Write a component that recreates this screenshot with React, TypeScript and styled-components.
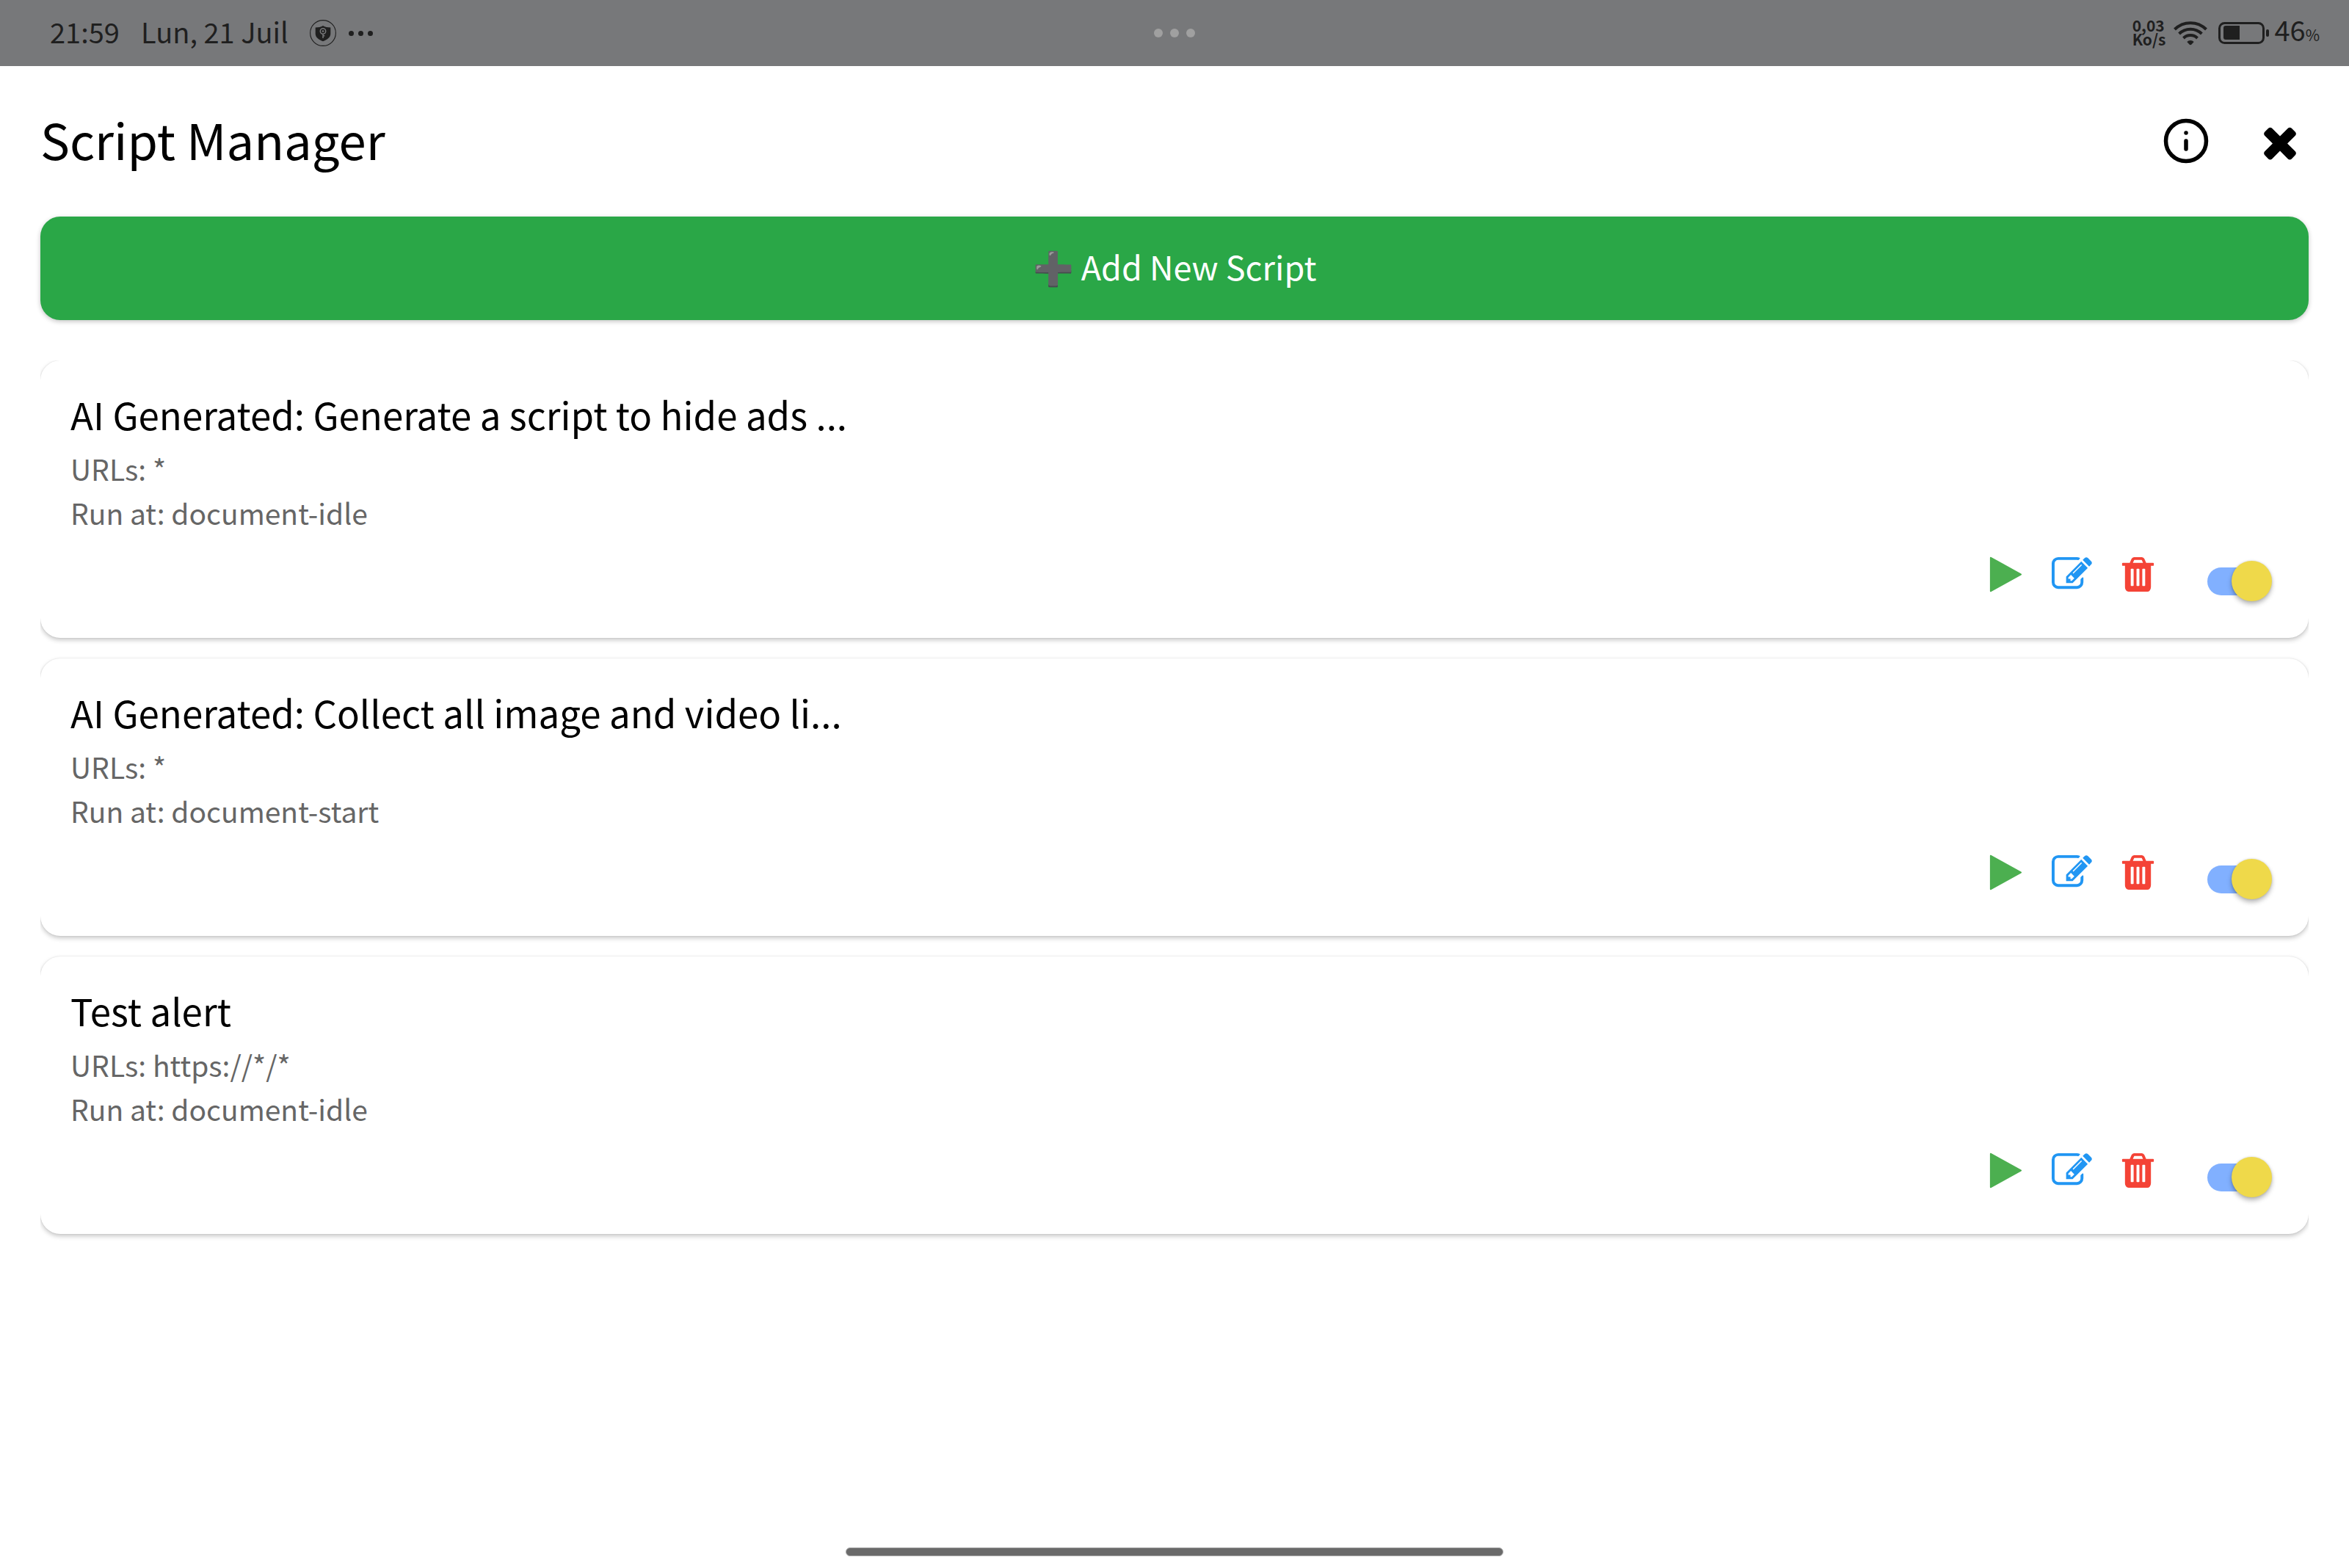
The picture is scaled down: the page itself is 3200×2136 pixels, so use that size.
import React, { useState } from "react";
import styled, { createGlobalStyle } from "styled-components";

const GlobalStyle = createGlobalStyle`
  *, *::before, *::after { box-sizing: border-box; }
  body {
    margin: 0;
    background: #ffffff;
    color: #000000;
    font-family: "Noto Sans CJK SC", "Noto Sans", sans-serif;
  }
  h1, h2, p, ul { margin: 0; padding: 0; font-weight: 400; }
  button { border: 0; background: none; padding: 0; font: inherit; cursor: pointer; }
`;

const Screen = styled.div`
  display: flex;
  flex-direction: column;
  min-height: 100vh;
`;

/* ---------- status bar ---------- */

const StatusBar = styled.div`
  display: grid;
  grid-template-columns: 1fr auto 1fr;
  align-items: center;
  height: 90px;
  padding: 0 40px;
  background: #77787a;
  color: #1f1f1f;
`;

const StatusGroup = styled.div<{ $gap: number; $indent?: number; $end?: boolean }>`
  display: flex;
  align-items: center;
  justify-content: ${(p) => (p.$end ? "flex-end" : "flex-start")};
  gap: ${(p) => p.$gap}px;
  padding-left: ${(p) => p.$indent ?? 0}px;
`;

const StatusText = styled.span`
  padding-bottom: 4px;
  font-size: 38px;
  line-height: 56px;
`;

const Percent = styled.span`
  font-size: 21px;
`;

const NetSpeed = styled.span`
  display: flex;
  flex-direction: column;
  padding-bottom: 2px;
  font-size: 21px;
  line-height: 19px;
  font-weight: 700;
`;

const Dots = styled.span<{ $size: number; $gap: number; $color: string }>`
  display: flex;
  gap: ${(p) => p.$gap}px;

  i {
    width: ${(p) => p.$size}px;
    height: ${(p) => p.$size}px;
    border-radius: 50%;
    background: ${(p) => p.$color};
  }
`;

/* ---------- page ---------- */

const Main = styled.main`
  flex: 1;
  padding: 53px 55px 0;
`;

const Header = styled.header`
  display: flex;
  justify-content: space-between;
  align-items: flex-start;
  margin-bottom: 60px;
`;

const Title = styled.h1`
  font-size: 67px;
  line-height: 92px;
`;

const HeaderActions = styled.div`
  display: flex;
  gap: 62px;
  padding: 16px 6px 0 0;
`;

const IconButton = styled.button<{ $size: number; $color?: string }>`
  display: block;
  width: ${(p) => p.$size}px;
  height: ${(p) => p.$size}px;
  color: ${(p) => p.$color ?? "#000000"};

  svg {
    display: block;
    width: 100%;
    height: 100%;
  }
`;

const AddButton = styled.button`
  && {
    display: block;
    width: 100%;
    padding: 36px 0 42px;
    border-radius: 27px;
    background: #2aa747;
    color: #ffffff;
    font-size: 45px;
    line-height: 63px;
    box-shadow: 0 2px 6px rgba(0, 0, 0, 0.24);
  }
`;

const ScriptList = styled.ul`
  display: flex;
  flex-direction: column;
  gap: 28px;
  margin-top: 55px;
  padding-bottom: 28px;
  overflow: hidden;
  list-style: none;
`;

const Card = styled.li`
  padding: 41px;
  border-radius: 27px;
  background: #ffffff;
  box-shadow: 0 3px 6px rgba(0, 0, 0, 0.22), 0 0 2px rgba(0, 0, 0, 0.12);
`;

const ScriptName = styled.h2`
  margin-bottom: 12px;
  font-size: 51px;
  line-height: 64px;
`;

const Meta = styled.p`
  color: #666666;
  font-size: 39px;
  line-height: 60px;
`;

const Actions = styled.div`
  display: flex;
  justify-content: flex-end;
  gap: 35px;
  height: 73px;
  margin-top: 27px;
`;

const SwitchLabel = styled.label`
  display: flex;
  align-items: center;
  padding: 0 16px 0 32px;
`;

const Switch = styled.input`
  appearance: none;
  display: flex;
  align-items: center;
  width: 81px;
  height: 38px;
  margin: 0;
  border-radius: 19px;
  background: #b0b0b0;
  cursor: pointer;

  &::before {
    content: "";
    flex: none;
    width: 55px;
    height: 55px;
    margin-left: -8px;
    border-radius: 50%;
    background: #f4f3f4;
    box-shadow: 0 4px 6px rgba(0, 0, 0, 0.28), 0 0 3px rgba(0, 0, 0, 0.14);
  }

  &:checked { background: #81b0ff; }
  &:checked::before { margin-left: 33px; background: #efd94a; }
`;

const Footer = styled.footer`
  display: flex;
  justify-content: center;
  padding-bottom: 16px;
`;

const HomeIndicator = styled.div`
  width: 28vw;
  height: 12px;
  border: 1px solid #a9a9a9;
  border-radius: 6px;
  background: #6a6a6a;
`;

/* ---------- icons ---------- */

const Glyph = ({ d, top = 0 }: { d: string; top?: number }) => (
  <svg viewBox={`0 ${top} 1792 1792`} fill="currentColor" overflow="visible" aria-hidden="true">
    <path d={d} />
  </svg>
);

const PLAY = "M1576 927l-1328 738q-23 13-39.5 3t-16.5-36v-1472q0-26 16.5-36t39.5 3l1328 738q23 13 23 31t-23 31z";
const EDIT =
  "M888 1184l116-116-152-152-116 116v56h96v96h56zm440-720q-16-16-33 1l-350 350q-17 17-1 33t33-1l350-350q17-17 1-33zm80 594v190q0 119-84.5 203.5t-203.5 84.5h-832q-119 0-203.5-84.5t-84.5-203.5v-832q0-119 84.5-203.5t203.5-84.5h832q63 0 117 25 15 7 18 23 3 17-9 29l-49 49q-14 14-32 8-23-6-45-6h-832q-66 0-113 47t-47 113v832q0 66 47 113t113 47h832q66 0 113-47t47-113v-126q0-13 9-22l64-64q15-15 35-7t20 29zm-96-738l288 288-672 672h-288v-288zm444 132l-92 92-288-288 92-92q28-28 68-28t68 28l152 152q28 28 28 68t-28 68z";
const TRASH =
  "M704 1376v-704q0-14-9-23t-23-9h-64q-14 0-23 9t-9 23v704q0 14 9 23t23 9h64q14 0 23-9t9-23zm256 0v-704q0-14-9-23t-23-9h-64q-14 0-23 9t-9 23v704q0 14 9 23t23 9h64q14 0 23-9t9-23zm256 0v-704q0-14-9-23t-23-9h-64q-14 0-23 9t-9 23v704q0 14 9 23t23 9h64q14 0 23-9t9-23zm-544-992h448l-48-117q-7-9-17-11h-317q-10 2-17 11zm928 32v64q0 14-9 23t-23 9h-96v948q0 83-47 143.5t-113 60.5h-832q-66 0-113-58.5t-47-141.5v-952h-96q-14 0-23-9t-9-23v-64q0-14 9-23t23-9h309l70-167q15-37 54-63t79-26h320q40 0 79 26t54 63l70 167h309q14 0 23 9t9 23z";
const TIMES =
  "M1490 1322q0 40-28 68l-136 136q-28 28-68 28t-68-28l-294-294-294 294q-28 28-68 28t-68-28l-136-136q-28-28-28-68t28-68l294-294-294-294q-28-28-28-68t28-68l136-136q28-28 68-28t68 28l294 294 294-294q28-28 68-28t68 28l136 136q28 28 28 68t-28 68l-294 294 294 294q28 28 28 68z";

const InfoIcon = () => (
  <svg viewBox="0 0 24 24" fill="none" stroke="currentColor" strokeWidth="2" strokeLinecap="round" aria-hidden="true">
    <circle cx="12" cy="12" r="10" />
    <path d="M12 16v-4M12 8h.01" />
  </svg>
);

const ShieldIcon = () => (
  <svg width="36" height="36" viewBox="0 0 36 36" aria-hidden="true">
    <circle cx="18" cy="18" r="17.4" fill="none" stroke="#1f1f1f" strokeWidth="1.1" />
    <path d="M18 8c3 2 6.500 2.300 10.300 2.400v8.600c0 5-5 8.300-10.300 10.300C12.700 27.300 7.700 24 7.700 19v-8.600C11.500 10.300 15 10 18 8z" fill="#1f1f1f" />
    <circle cx="18" cy="15.500" r="3.700" fill="none" stroke="#77787a" strokeWidth="1.500" />
    <circle cx="18" cy="15.500" r="1.300" fill="#77787a" />
    <path d="M18 19v6M18 21.700h2.300" stroke="#77787a" strokeWidth="1.500" fill="none" />
  </svg>
);

const WifiIcon = () => (
  <svg width="46" height="34" viewBox="0 0 46 34" fill="none" stroke="#1f1f1f" strokeWidth="4" aria-hidden="true">
    <path d="M1.500 12a30.500 30.500 0 0 1 43 0" />
    <path d="M7.600 18a22 22 0 0 1 30.800 0" />
    <path d="M13.500 24a13.500 13.500 0 0 1 19 0" />
    <path d="M18.300 29a6.600 6.600 0 0 1 9.400 0L24.500 32.600q-1.500 1.300-3 0z" fill="#1f1f1f" stroke="none" />
  </svg>
);

const BatteryIcon = () => (
  <svg width="69" height="30" viewBox="0 0 69 30" aria-hidden="true">
    <rect x="1.500" y="1.500" width="60" height="27" rx="7" fill="none" stroke="#1f1f1f" strokeWidth="3" />
    <path d="M29 5v19H10q-3 0-3-3V8q0-3 3-3z" fill="#1f1f1f" />
    <rect x="65" y="10" width="4" height="10" rx="2" fill="#1f1f1f" />
  </svg>
);

const ThreeDots = ({ size, gap, color }: { size: number; gap: number; color: string }) => (
  <Dots $size={size} $gap={gap} $color={color}>
    <i />
    <i />
    <i />
  </Dots>
);

/* ---------- data ---------- */

type Script = { name: string; urls: string; runAt: string };

const SCRIPTS: Script[] = [
  { name: "AI Generated: Generate a script to hide ads ...", urls: "*", runAt: "document-idle" },
  { name: "AI Generated: Collect all image and video li...", urls: "*", runAt: "document-start" },
  { name: "Test alert", urls: "https://*/*", runAt: "document-idle" },
];

function ScriptCard({ name, urls, runAt }: Script) {
  const [enabled, setEnabled] = useState(true);
  return (
    <Card>
      <ScriptName>{name}</ScriptName>
      <Meta>URLs: {urls}</Meta>
      <Meta>Run at: {runAt}</Meta>
      <Actions>
        <IconButton $size={55} $color="#4caf50" aria-label="Run">
          <Glyph d={PLAY} />
        </IconButton>
        <IconButton $size={55} $color="#2196f3" aria-label="Edit">
          <Glyph d={EDIT} />
        </IconButton>
        <IconButton $size={55} $color="#f44336" aria-label="Delete">
          <Glyph d={TRASH} />
        </IconButton>
        <SwitchLabel>
          <Switch
            type="checkbox"
            role="switch"
            aria-label="Enabled"
            checked={enabled}
            onChange={(e) => setEnabled(e.target.checked)}
          />
        </SwitchLabel>
      </Actions>
    </Card>
  );
}

export default function App() {
  return (
    <Screen>
      <GlobalStyle />
      <StatusBar>
        <StatusGroup $gap={29} $indent={28}>
          <StatusText>21:59</StatusText>
          <StatusText>Lun, 21 Juil</StatusText>
          <StatusGroup $gap={17}>
            <ShieldIcon />
            <ThreeDots size={7} gap={6} color="#1f1f1f" />
          </StatusGroup>
        </StatusGroup>
        <ThreeDots size={12} gap={10} color="#a0a0a0" />
        <StatusGroup $gap={11} $end>
          <NetSpeed>
            <span>0,03</span>
            <span>Ko/s</span>
          </NetSpeed>
          <StatusGroup $gap={15}>
            <WifiIcon />
            <StatusGroup $gap={7}>
              <BatteryIcon />
              <StatusText>
                46<Percent>%</Percent>
              </StatusText>
            </StatusGroup>
          </StatusGroup>
        </StatusGroup>
      </StatusBar>

      <Main>
        <Header>
          <Title>Script Manager</Title>
          <HeaderActions>
            <IconButton $size={66} aria-label="Information">
              <InfoIcon />
            </IconButton>
            <IconButton $size={66} aria-label="Close">
              <Glyph d={TIMES} top={-32} />
            </IconButton>
          </HeaderActions>
        </Header>

        <AddButton>➕ Add New Script</AddButton>

        <ScriptList>
          {SCRIPTS.map((script) => (
            <ScriptCard key={script.name} {...script} />
          ))}
        </ScriptList>
      </Main>

      <Footer>
        <HomeIndicator />
      </Footer>
    </Screen>
  );
}
